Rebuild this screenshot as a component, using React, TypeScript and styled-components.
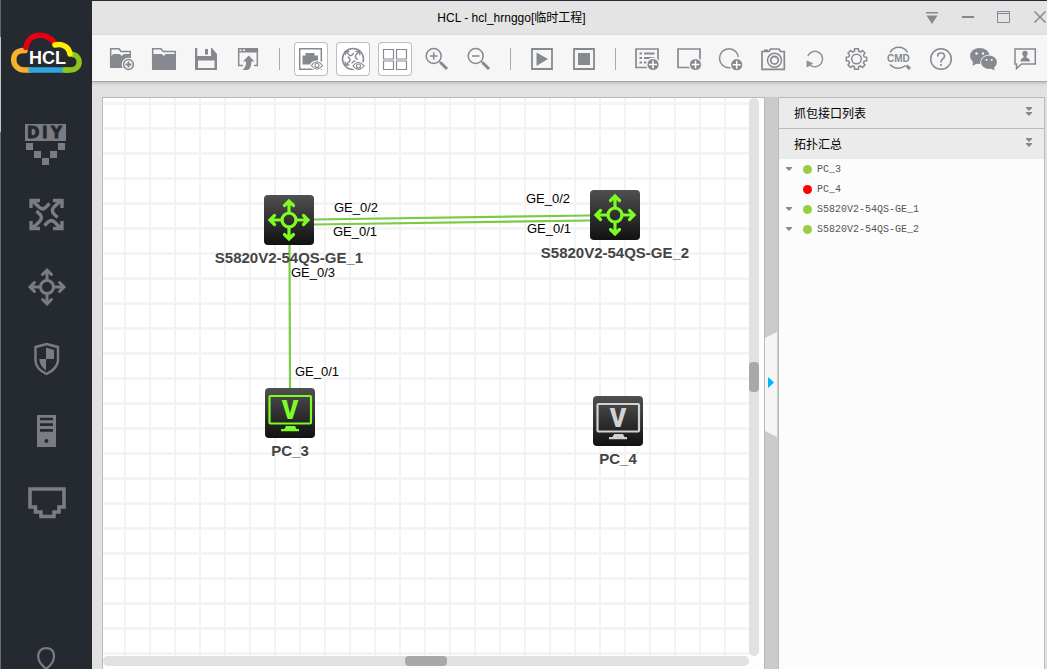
import React from "react";
import styled, { createGlobalStyle } from "styled-components";

const GREY = "#868990";
const SIDE = "#7b7c82";
const LIME = "#7dfb23";

const GlobalStyle = createGlobalStyle`
  * { box-sizing: border-box; }
  body {
    margin: 0;
    font-family: "Liberation Sans", "Noto Sans CJK SC", sans-serif;
    font-size: 12px;
    color: #000;
  }
  button {
    margin: 0;
    padding: 0;
    border: 0;
    background: none;
    font: inherit;
    color: inherit;
    cursor: pointer;
  }
  svg { display: block; }
`;

const Shell = styled.div`
  display: flex;
  height: 100vh;
  overflow: hidden;
  background: #e1e1e1;
`;

const Sidebar = styled.nav`
  flex: 0 0 92px;
  display: flex;
  flex-direction: column;
  padding: 0 1px;
  overflow: hidden;
  background:
    linear-gradient(#666 0 37px, #c2c5c8 37px 132px, #6b6b6b 132px) 0 0 / 1px 100% no-repeat,
    #252930;
`;

const Brand = styled.div`
  flex: 0 0 108px;
  padding: 32px 0 0 9px;
`;

const SideButton = styled.button`
  flex: 0 0 72px;
  display: flex;
  align-items: center;
  justify-content: center;
`;

const SideFooter = styled.button`
  flex: 0 0 23px;
  margin-top: auto;
  display: flex;
  justify-content: center;
  overflow: hidden;
`;

const Main = styled.div`
  flex: 1;
  min-width: 0;
  display: flex;
  flex-direction: column;
  border-top: 1px solid #262738;
`;

const TitleBar = styled.header`
  flex: 0 0 34px;
  display: flex;
  align-items: center;
  background: #e4e4e4;
`;

const Title = styled.h1`
  flex: 1;
  margin: 0;
  padding-left: 6px;
  font-size: 12px;
  line-height: 18px;
  font-weight: 400;
  text-align: center;
`;

const WindowControls = styled.div`
  display: flex;
  gap: 22px;
`;

const Toolbar = styled.div`
  position: relative;
  flex: 0 0 47px;
  display: flex;
  align-items: center;
  gap: 8px;
  padding: 2px 0 0 13px;
  background: #f6f6f6;
  border-bottom: 1px solid #a6a6a6;
  box-shadow: 0 1px 3px #0003;
`;

const Tool = styled.button<{ $on?: boolean }>`
  flex: 0 0 34px;
  height: 34px;
  border-radius: 4px;
  background: ${(p) => (p.$on ? "#fff" : "transparent")};
  box-shadow: ${(p) => (p.$on ? "inset 0 0 0 1px #bdbdbd" : "none")};
`;

const Divider = styled.span`
  flex: 0 0 1px;
  height: 22px;
  margin: 0 6px;
  background: #a9abaf;
`;

const Workspace = styled.main`
  flex: 1;
  min-height: 0;
  display: flex;
  padding: 15px 2px 0 10px;
`;

const CanvasPane = styled.section`
  flex: 1;
  min-width: 0;
  display: grid;
  grid-template: 1fr 10px / 1fr 10px;
  padding: 0 5px 3px 0;
  background: #fdfdfd;
  border: solid #b9b9b9;
  border-width: 1px 1px 0 1px;
`;

const Canvas = styled.div`
  position: relative;
  overflow: hidden;
  background:
    linear-gradient(90deg, #f3f3f3 2px, transparent 2px) 21px 0 / 25px 25px,
    linear-gradient(#f4f4f4 3px, transparent 3px) 0 4px / 25px 25px,
    #fff;
`;

const Track = styled.div`
  display: flex;
  align-items: center;
  justify-content: center;
  border-radius: 5px;
  background: #e1e1e1;
`;

const Thumb = styled.span<{ $w: number; $h: number }>`
  width: ${(p) => p.$w}px;
  height: ${(p) => p.$h}px;
  border-radius: 4px;
  background: #a8a8a8;
`;

const Links = styled.svg`
  position: absolute;
  inset: 0;
  width: 100%;
  height: 100%;
`;

const Node = styled.div<{ $x: number; $y: number }>`
  position: absolute;
  left: ${(p) => p.$x}px;
  top: ${(p) => p.$y}px;
  width: 50px;
  display: flex;
  flex-direction: column;
  align-items: center;
  gap: 3px;
`;

const NodeTile = styled.div`
  width: 50px;
  height: 50px;
  border-radius: 4px;
  background: linear-gradient(#505050, #111);
`;

const NodeName = styled.span`
  font-size: 15px;
  line-height: 20px;
  font-weight: 700;
  color: #444;
  white-space: nowrap;
`;

const PortLabel = styled.span<{ $x: number; $y: number }>`
  position: absolute;
  left: ${(p) => p.$x}px;
  top: ${(p) => p.$y}px;
  font-size: 13px;
  line-height: 16px;
  white-space: nowrap;
`;

const Splitter = styled.div`
  flex: 0 0 13px;
  display: flex;
  align-items: center;
  padding-top: 3px;
  background: #cbcbcb;
`;

const SidePanel = styled.aside`
  flex: 0 0 267px;
  background: #fcfcfc;
  border: solid #b9b9b9;
  border-width: 1px 1px 0 1px;
`;

const PanelHeader = styled.button<{ $ruled?: boolean }>`
  width: 100%;
  height: ${(p) => (p.$ruled ? 31 : 30)}px;
  display: flex;
  align-items: center;
  justify-content: space-between;
  padding: 0 12px 2px 15px;
  background: #ebebeb;
  border-bottom: ${(p) => (p.$ruled ? "1px solid #b9b9b9" : "0")};
`;

const Tree = styled.ul`
  margin: 0;
  padding: 0;
  list-style: none;
`;

const TreeRow = styled.li`
  height: 20px;
  display: flex;
  align-items: center;
  padding-left: 7px;
`;

const DeviceName = styled.span`
  padding-top: 2px;
  font: 10px/18px "Liberation Mono", monospace;
  color: #555;
`;

const Caret = styled.button`
  width: 6px;
  height: 6px;
  margin-right: 11px;
`;

const Dot = styled.span<{ $up: boolean }>`
  width: 9px;
  height: 9px;
  margin-right: 5px;
  border-radius: 50%;
  background: ${(p) => (p.$up ? "#97d03f" : "#f00")};
`;

const Plus = ({ x, y }: { x: number; y: number }) => (
  <>
    <circle cx={x} cy={y} r="7" fill="#f6f6f6" />
    <circle cx={x} cy={y} r="5.6" fill={GREY} />
    <path d={`M${x - 4} ${y}h8M${x} ${y - 4}v8`} stroke="#fff" strokeWidth="1.5" />
  </>
);

const Eye = ({ x, y }: { x: number; y: number }) => (
  <>
    <ellipse cx={x} cy={y} rx="7" ry="5" fill="#fff" />
    <path
      d={`M${x - 5.6} ${y}q5.6 -7 11.2 0q-5.6 7 -11.2 0z`}
      fill="#fff"
      stroke={GREY}
      strokeWidth="1.1"
    />
    <circle cx={x} cy={y} r="2" fill="#fff" stroke={GREY} strokeWidth="1.1" />
  </>
);

const crossArrows =
  "M9.500 8L17 15Q20.500 18.500 23.500 15.500L27.500 11.500M39.500 8L32.500 14.500Q28.500 18.500 32 22L35.500 25.500M39.500 37L33 30.500Q29.500 27 26 30L22.500 33.500M9.500 37L16.500 30.500Q21.500 26 18 22.500L14.500 19M9 16V8.500H18M31 8.500H40V16M40 29V36.500H31M18 36.500H9V29";

const FourWay = ({ c, r, reach, w }: { c: [number, number]; r: number; reach: number; w: number }) => (
  <g transform={`translate(${c[0]} ${c[1]})`} fill="none" strokeWidth={w} strokeLinejoin="miter" strokeLinecap="round">
    <circle r={r} />
    {[0, 90, 180, 270].map((a) => (
      <path
        key={a}
        transform={`rotate(${a})`}
        d={`M0 ${-r}V${-reach + 2}M${-4.5} ${-reach + 6}L0 ${-reach + 1.5}L4.5 ${-reach + 6}`}
      />
    ))}
  </g>
);

const gearPath = (() => {
  const pts: string[] = [];
  for (let i = 0; i < 8; i++) {
    const base = (i * Math.PI) / 4;
    const steps: [number, number][] = [
      [-0.27, 8],
      [-0.18, 10.3],
      [0.18, 10.3],
      [0.27, 8],
    ];
    steps.forEach(([d, r]) =>
      pts.push(`${(16.5 + r * Math.cos(base + d)).toFixed(2)} ${(17 + r * Math.sin(base + d)).toFixed(2)}`)
    );
  }
  return `M${pts.join("L")}Z`;
})();

type ToolDef = { label: string; on?: boolean; art: React.ReactNode };
const line = { fill: "none", stroke: GREY, strokeWidth: 1.5 };

const tools: (ToolDef | null)[] = [
  {
    label: "New project",
    art: (
      <>
        <path d="M5.700 25V6.700H14L16 9.500H25.300V13" {...line} />
        <path d="M5 26V15L8.500 12H14.500L17 14L18.500 12H26V26z" fill={GREY} />
        <circle cx="23.500" cy="22.500" r="6.800" fill="#f6f6f6" />
        <circle cx="23.500" cy="22.500" r="4.900" {...line} />
        <path d="M20.500 22.500h6M23.500 19.500v6" stroke={GREY} strokeWidth="1.800" />
      </>
    ),
  },
  {
    label: "Open project",
    art: (
      <>
        <path d="M5.700 25V6.700H14L16 9.500H28.300V13" {...line} />
        <path d="M5 28V12H14.500L17 14L18.500 12H29V28z" fill={GREY} />
      </>
    ),
  },
  {
    label: "Save",
    art: (
      <>
        <path fillRule="evenodd" d="M6 6H23L28 12V28H6ZM8.500 6V14H22V6ZM9 18.500V26H25.500V18.500Z" fill={GREY} />
        <path d="M8.500 6h13.500v8H8.500z" fill="#f6f6f6" />
        <path d="M16 7h3v5.500h-3z" fill={GREY} />
      </>
    ),
  },
  {
    label: "Export",
    art: (
      <>
        <path d="M12 23.500H7.700V7H26.300V23.500H23" {...line} />
        <path d="M7 6h20v4.500H7z" fill={GREY} />
        <path d="M8.500 7.500h2v1.500h-2zM12 7.500h2v1.500h-2z" fill="#f6f6f6" />
        <path d="M17.700 13.500L23.500 19.500H20.500Q20.500 26 17 28H11.500Q15.500 25 15 19.500H12z" fill={GREY} />
      </>
    ),
  },
  null,
  {
    label: "Show interfaces",
    on: true,
    art: (
      <>
        <path d="M5.700 6.700H27.300V27.300H5.700z" {...line} />
        <path d="M8.500 13.500H11.500V11H20.500V13.500H24V22.500H8.500z" fill={GREY} />
        <Eye x={23} y={23.5} />
      </>
    ),
  },
  {
    label: "Show devices",
    on: true,
    art: (
      <>
        <circle cx="17" cy="17" r="10.500" {...line} />
        <g transform="translate(5 5.500) scale(.47 .48)" fill="none" stroke={GREY} strokeWidth="3">
          <path d={crossArrows} />
        </g>
        <Eye x={22.5} y={24} />
      </>
    ),
  },
  {
    label: "Grid",
    on: true,
    art: (
      <path
        d="M5.500 7.500h10v9.500h-10zM18.500 7.500h10v9.500h-10zM5.500 19h10v8.500h-10zM18.500 19h10v8.500h-10z"
        fill="none"
        stroke={GREY}
        strokeWidth="1.200"
      />
    ),
  },
  {
    label: "Zoom in",
    art: (
      <>
        <circle cx="13.700" cy="14" r="7.500" {...line} />
        <path d="M10 14h7.500M13.700 10.300v7.500M19 19l2 2" {...line} />
        <path d="M20.500 20.500L27 27" stroke={GREY} strokeWidth="3" />
      </>
    ),
  },
  {
    label: "Zoom out",
    art: (
      <>
        <circle cx="13.700" cy="14" r="7.500" {...line} />
        <path d="M10 14h7.500M19 19l2 2" {...line} />
        <path d="M20.500 20.500L27 27" stroke={GREY} strokeWidth="3" />
      </>
    ),
  },
  null,
  {
    label: "Start",
    art: (
      <>
        <path d="M7 7H27V27H7z" {...line} strokeWidth="1.800" />
        <path d="M11.500 10.500L23 17L11.500 24z" fill={GREY} />
      </>
    ),
  },
  {
    label: "Stop",
    art: (
      <>
        <path d="M7 7H27V27H7z" {...line} strokeWidth="1.800" />
        <path d="M11 11h12v12H11z" fill={GREY} />
      </>
    ),
  },
  null,
  {
    label: "Add note",
    art: (
      <>
        <path d="M6 7H28V25.500H6z" {...line} strokeWidth="1.700" />
        <path d="M9.500 11.500h2.500M9.500 16h2.500M9.500 20.500h2.500M14 11.500h10.500M14 16h10.500M14 20.500h5" stroke={GREY} strokeWidth="1.800" />
        <Plus x={23} y={22.5} />
      </>
    ),
  },
  {
    label: "Add rectangle",
    art: (
      <>
        <path d="M6 7H28V25.500H6z" {...line} strokeWidth="1.700" />
        <Plus x={23.5} y={22.5} />
      </>
    ),
  },
  {
    label: "Add ellipse",
    art: (
      <>
        <circle cx="15" cy="16.300" r="9.500" {...line} />
        <path d="M17 22h9v6h-9zM22 15h4v6h-4z" fill="#f6f6f6" />
        <Plus x={22.7} y={22.7} />
      </>
    ),
  },
  {
    label: "Screenshot",
    art: (
      <>
        <path d="M6 9.500H13L14.500 7H23L24.500 9.500H28.300V27.300H6z" {...line} strokeWidth="1.700" />
        <path d="M8 7.500h4v2H8z" fill={GREY} />
        <circle cx="18.500" cy="18.300" r="7" {...line} />
        <circle cx="18.500" cy="18.300" r="3.800" {...line} strokeWidth="1.800" />
      </>
    ),
  },
  {
    label: "Refresh",
    art: (
      <>
        <path d="M9.800 14A7.700 7.700 0 1 1 12 23" {...line} stroke="#96938f" />
        <path d="M9 19v6l5.500-3.500z" fill="#96938f" stroke="#96938f" />
      </>
    ),
  },
  {
    label: "Settings",
    art: (
      <>
        <path d={gearPath} {...line} />
        <circle cx="16.500" cy="17" r="4.800" {...line} />
      </>
    ),
  },
  {
    label: "Command line",
    art: (
      <>
        <path d="M8 10.500A10 10 0 0 1 25.500 10.500M8 22.500Q12 26.500 17 26.200Q20.500 26 23.500 23.500" {...line} />
        <text x="5" y="20" fontSize="10" fontWeight="700" fill={GREY}>CMD</text>
        <path d="M24.500 23.500L28 27" stroke={GREY} strokeWidth="3" />
      </>
    ),
  },
  {
    label: "Help",
    art: (
      <>
        <circle cx="17" cy="17" r="10.300" {...line} />
        <path d="M13.700 14.500Q13.500 11 17 11T20.500 14Q20.500 15.500 18.500 17.200Q17 18.500 17 20.500" {...line} strokeWidth="1.600" />
        <circle cx="17" cy="23" r="1.100" fill={GREY} />
      </>
    ),
  },
  {
    label: "WeChat",
    art: (
      <>
        <ellipse cx="13.700" cy="14" rx="9.700" ry="8" fill={GREY} />
        <path d="M7 19L6.500 24L12 21z" fill={GREY} />
        <ellipse cx="23" cy="20.300" rx="8.800" ry="7.600" fill="#f6f6f6" />
        <ellipse cx="23" cy="20.300" rx="7.900" ry="6.700" fill={GREY} />
        <path d="M24 26l4.500 2.500-.500-4z" fill={GREY} />
        <g fill="#f6f6f6">
          <circle cx="10.500" cy="11.500" r="1.200" />
          <circle cx="17" cy="11.500" r="1.200" />
          <circle cx="20.500" cy="18" r="1" />
          <circle cx="25.700" cy="18" r="1" />
        </g>
      </>
    ),
  },
  {
    label: "Feedback",
    art: (
      <>
        <path d="M7 7H27.300V22H13.500L8.500 26.500V22H7z" {...line} />
        <circle cx="17" cy="11.500" r="2.700" fill={GREY} />
        <path d="M15.500 13h3v2.500Q22 16.500 22 19.500H12.500Q12.500 16.500 15.500 15.500z" fill={GREY} />
      </>
    ),
  },
];

const sideItems: { label: string; art: React.ReactNode }[] = [
  {
    label: "DIY devices",
    art: (
      <>
        <path
          d="M3 4h41v17H3zM4 23h7v7H4zM12 31h7v7h-7zM20 38h7v7h-7zM28 31h7v7h-7zM36 23h7v7h-7z"
          fill={SIDE}
        />
        <text
          x="5 20 29"
          y="18"
          fontSize="15"
          fontWeight="700"
          fontFamily="DejaVu Sans"
          fill="#252930"
          stroke="#252930"
          strokeWidth=".8"
        >
          DIY
        </text>
      </>
    ),
  },
  { label: "Routers", art: <path d={crossArrows} fill="none" stroke={SIDE} strokeWidth="3.400" /> },
  {
    label: "Switches",
    art: (
      <g stroke={SIDE}>
        <FourWay c={[25, 23]} r={6.5} reach={18.5} w={3} />
      </g>
    ),
  },
  {
    label: "Firewalls",
    art: (
      <>
        <path d="M24.500 8L36 11V25Q35 33 24.500 38Q14 33 13.500 25V11Z" fill="none" stroke={SIDE} strokeWidth="2.400" />
        <path d="M24 11.500L32 14V23H24V34.500Q17.500 30 17.300 23H24z" fill={SIDE} />
      </>
    ),
  },
  {
    label: "Servers",
    art: (
      <path
        fillRule="evenodd"
        d="M15 7H34V39H15ZM18 9.700V12.300H31V9.700ZM18 15.200V18H31V15.200ZM18 21V23.800H31V21ZM22.400 33a2 2 0 1 0 4 0a2 2 0 1 0 -4 0Z"
        fill={SIDE}
      />
    ),
  },
  {
    label: "Connections",
    art: <path d="M8 9H42V27H37V32H32V36.500H19V32H13.500V27H8Z" fill="none" stroke={SIDE} strokeWidth="3.600" />,
  },
];

const PcArt = ({ color }: { color: string }) => (
  <svg width="50" height="50" viewBox="0 0 50 50">
    <rect x="4.500" y="8" width="41.500" height="27.500" rx="1" fill="none" stroke={color} strokeWidth="2.200" />
    <text x="25" y="31" textAnchor="middle" fontFamily="Roboto" fontWeight="900" fontSize="25" fill={color}>V</text>
    <path d="M21 38h9l1.500 3H34v2.200H16V41h3.500z" fill={color} />
  </svg>
);

const SwitchArt = () => (
  <svg width="50" height="50" viewBox="0 0 50 50" stroke={LIME}>
    <FourWay c={[25, 25]} r={7} reach={20.5} w={3.2} />
  </svg>
);

const nodes = [
  { name: "S5820V2-54QS-GE_1", x: 161, y: 97, art: <SwitchArt /> },
  { name: "S5820V2-54QS-GE_2", x: 487, y: 92, art: <SwitchArt /> },
  { name: "PC_3", x: 162, y: 290, art: <PcArt color={LIME} /> },
  { name: "PC_4", x: 490, y: 298, art: <PcArt color="#d2d2d2" /> },
];

const ports: [string, number, number][] = [
  ["GE_0/2", 231, 102],
  ["GE_0/1", 230, 126],
  ["GE_0/3", 188, 167],
  ["GE_0/1", 192, 266],
  ["GE_0/2", 423, 93],
  ["GE_0/1", 424, 123],
];

const devices = [
  { name: "PC_3", up: true },
  { name: "PC_4", up: false },
  { name: "S5820V2-54QS-GE_1", up: true },
  { name: "S5820V2-54QS-GE_2", up: true },
];

const Collapse = () => (
  <svg width="6" height="10" viewBox="0 0 6 10" fill={GREY}>
    <path d="M0 0h6v1L3 4L0 1zM0 5h6v1L3 9L0 6z" />
  </svg>
);

export default function App() {
  return (
    <>
      <GlobalStyle />
      <Shell>
        <Sidebar aria-label="Devices">
          <Brand>
            <svg width="74" height="44" viewBox="10 32 74 44" fill="none" strokeWidth="5.500" strokeLinecap="round">
              <path d="M25 50.500C16 50 13.700 55 13.700 60S18 70 24 70H30" stroke="#fbb02d" />
              <path d="M26 47.500C28 32 48 32 54.500 43" stroke="#e60012" />
              <path d="M73 54.500C81.500 56 82 70 70 70H64" stroke="#8fc31f" />
              <path d="M31 70H62" stroke="#2ea7e0" />
              <path d="M65 70H68" stroke="#8fc31f" />
              <path d="M55 45C62 43 69 47 70 54" stroke="#fff100" />
              <text x="29" y="64" fontSize="18" fontWeight="700" fill="#fff">HCL</text>
            </svg>
          </Brand>
          {sideItems.map((s) => (
            <SideButton key={s.label} aria-label={s.label}>
              <svg width="48" height="48" viewBox="0 0 48 48">{s.art}</svg>
            </SideButton>
          ))}
          <SideFooter aria-label="Locate">
            <svg width="24" height="30" viewBox="0 0 24 30" fill="none" stroke={SIDE} strokeWidth="2.200">
              <path d="M15 26L9 20C1 12 4 2.200 12.300 2.200S23 12 15.500 20L9 26" />
            </svg>
          </SideFooter>
        </Sidebar>
        <Main>
          <TitleBar>
            <Title>HCL - hcl_hrnggo[临时工程]</Title>
            <WindowControls>
              <button aria-label="Menu">
                <svg width="14" height="14" viewBox="0 0 14 14" fill={GREY}>
                  <path d="M1 1h12v1.500H1zM1.500 4.500h11L7 13z" />
                </svg>
              </button>
              <button aria-label="Minimize">
                <svg width="14" height="14" viewBox="0 0 14 14" fill={GREY}>
                  <path d="M1 5h12v2H1z" />
                </svg>
              </button>
              <button aria-label="Maximize">
                <svg width="14" height="14" viewBox="0 0 14 14" fill="none" stroke={GREY}>
                  <path d="M.5 .5h12v11H.5zM.5 2.500h12" />
                </svg>
              </button>
              <button aria-label="Close">
                <svg width="14" height="14" viewBox="0 0 14 14" fill="none" stroke={GREY} strokeWidth="1.500">
                  <path d="M1.500 .5l11 11M12.500 .5l-11 11" />
                </svg>
              </button>
            </WindowControls>
          </TitleBar>
          <Toolbar role="toolbar">
            {tools.map((t, i) =>
              t ? (
                <Tool key={t.label} aria-label={t.label} $on={t.on}>
                  <svg width="34" height="34" viewBox="0 0 34 34">{t.art}</svg>
                </Tool>
              ) : (
                <Divider key={i} />
              )
            )}
          </Toolbar>
          <Workspace>
            <CanvasPane>
              <Canvas>
                <Links fill="none" stroke="#7acb46" strokeWidth="2.200">
                  <path d="M211 121.500L487 117.500M211 126.500L487 122.500M186.500 147L187 290" />
                </Links>
                {nodes.map((n) => (
                  <Node key={n.name} $x={n.x} $y={n.y}>
                    <NodeTile>{n.art}</NodeTile>
                    <NodeName>{n.name}</NodeName>
                  </Node>
                ))}
                {ports.map(([name, x, y]) => (
                  <PortLabel key={`${x}-${y}`} $x={x} $y={y}>{name}</PortLabel>
                ))}
              </Canvas>
              <Track>
                <Thumb $w={10} $h={30} />
              </Track>
              <Track>
                <Thumb $w={42} $h={10} />
              </Track>
            </CanvasPane>
            <Splitter>
              <button aria-label="Toggle panel">
                <svg width="13" height="105" viewBox="0 0 13 105">
                  <path d="M0 6L12 0V105L0 99z" fill="#f5f5f5" />
                  <path d="M3 45l6 5.500L3 56z" fill="#00b4ff" />
                </svg>
              </button>
            </Splitter>
            <SidePanel>
              <PanelHeader $ruled>
                抓包接口列表
                <Collapse />
              </PanelHeader>
              <PanelHeader>
                拓扑汇总
                <Collapse />
              </PanelHeader>
              <Tree>
                {devices.map((d) => (
                  <TreeRow key={d.name}>
                    <Caret aria-label={`Expand ${d.name}`} disabled={!d.up}>
                      {d.up && (
                        <svg width="6" height="6" viewBox="0 0 6 6" fill={GREY}>
                          <path d="M0 1h6v1L3 5L0 2z" />
                        </svg>
                      )}
                    </Caret>
                    <Dot $up={d.up} />
                    <DeviceName>{d.name}</DeviceName>
                  </TreeRow>
                ))}
              </Tree>
            </SidePanel>
          </Workspace>
        </Main>
      </Shell>
    </>
  );
}
